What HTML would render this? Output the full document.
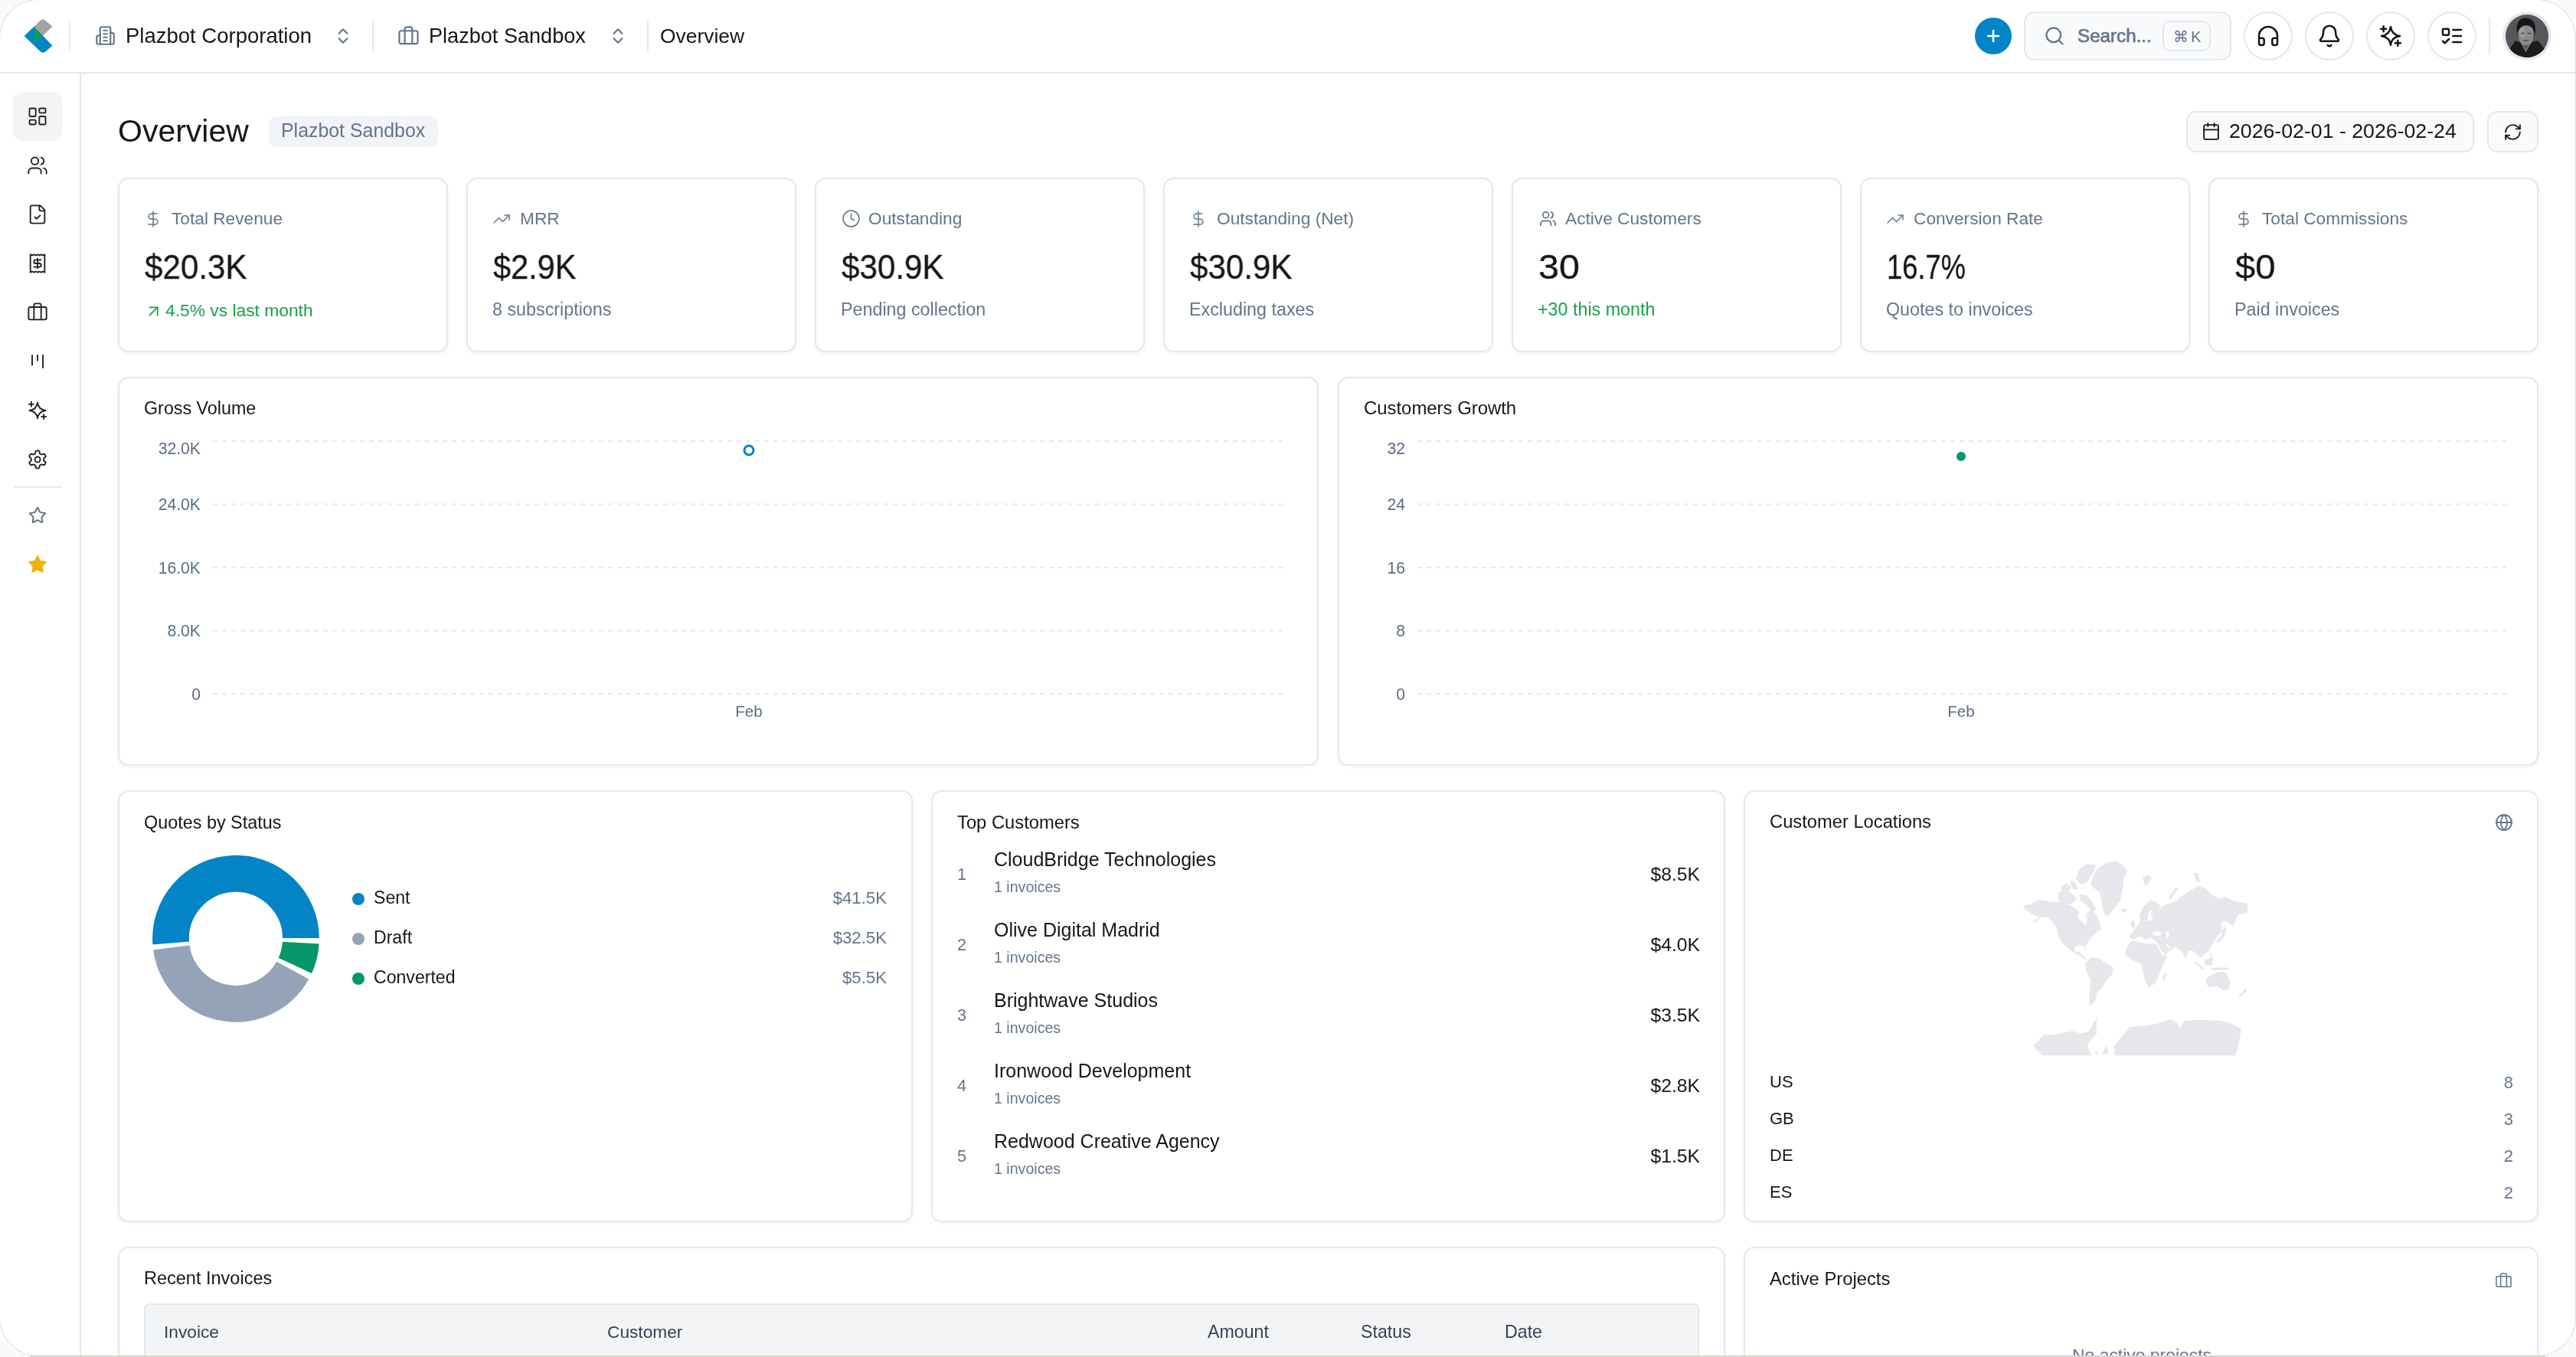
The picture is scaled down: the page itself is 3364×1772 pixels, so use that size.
<!DOCTYPE html>
<html><head><meta charset="utf-8"><style>
html,body{margin:0;padding:0;}
body{width:3364px;height:1772px;background:#fafaf8;position:relative;overflow:hidden;font-family:"Liberation Sans",sans-serif;}
#win{position:absolute;left:0;top:0;width:3363px;height:1770px;background:#fff;border-radius:50px;overflow:hidden;box-shadow:0 0 0 1px rgba(110,110,100,0.2);}
.t{will-change:transform;}
.t{position:absolute;white-space:nowrap;}
.b{position:absolute;}
.ic{position:absolute;overflow:visible;}
#strip{position:absolute;left:40px;top:1770px;width:3284px;height:2px;background:#d6d6cf;}
</style></head><body>
<div id="win">
<svg class="ic" style="left:0;top:0;width:110px;height:95px" viewBox="0 0 110 95">
<path d="M44.2 35 L53 26.6 Q56 23.8 59 26.6 L68.6 34.5 L55.8 46.6 Z" fill="#a3a3a3"/>
<path d="M31.6 47 L44.2 35 L55.8 46.6 L68.4 59.4 L60 67 Q56.2 70.3 52.4 67 Z" fill="#0284c7"/>
<path d="M44.2 35 L55.8 46.6 L44.2 57.8 Z" fill="#0b9a6a"/>
</svg>
<div class="b" style="left:90px;top:27px;width:2px;height:40px;background:#e2e8f0"></div>
<svg class="ic" style="left:124px;top:33px;width:27px;height:27px;" viewBox="0 0 24 24" fill="none" stroke="#64748b" stroke-width="1.9" stroke-linecap="round" stroke-linejoin="round"><path d="M6 22V4a2 2 0 0 1 2-2h8a2 2 0 0 1 2 2v18Z"/><path d="M6 12H4a2 2 0 0 0-2 2v6a2 2 0 0 0 2 2h2"/><path d="M18 9h2a2 2 0 0 1 2 2v9a2 2 0 0 1-2 2h-2"/><path d="M10 6h4"/><path d="M10 10h4"/><path d="M10 14h4"/><path d="M10 18h4"/></svg>
<div class="t" style="left:163.5px;top:32.72px;font-size:27.5px;line-height:27.5px;color:#171717;font-weight:400;">Plazbot Corporation</div>
<svg class="ic" style="left:435px;top:34px;width:26px;height:26px;" viewBox="0 0 24 24" fill="none" stroke="#64748b" stroke-width="2" stroke-linecap="round" stroke-linejoin="round"><path d="m7 15 5 5 5-5"/><path d="m7 9 5-5 5 5"/></svg>
<div class="b" style="left:486px;top:27px;width:2px;height:40px;background:#e2e8f0"></div>
<svg class="ic" style="left:519px;top:33px;width:29px;height:29px;" viewBox="0 0 24 24" fill="none" stroke="#64748b" stroke-width="1.8" stroke-linecap="round" stroke-linejoin="round"><path d="M16 20V4a2 2 0 0 0-2-2h-4a2 2 0 0 0-2 2v16"/><rect width="20" height="14" x="2" y="6" rx="2"/></svg>
<div class="t" style="left:559.5px;top:33.06px;font-size:27.1px;line-height:27.1px;color:#171717;font-weight:400;">Plazbot Sandbox</div>
<svg class="ic" style="left:794px;top:34px;width:26px;height:26px;" viewBox="0 0 24 24" fill="none" stroke="#64748b" stroke-width="2" stroke-linecap="round" stroke-linejoin="round"><path d="m7 15 5 5 5-5"/><path d="m7 9 5-5 5 5"/></svg>
<div class="b" style="left:845px;top:27px;width:2px;height:40px;background:#e2e8f0"></div>
<div class="t" style="left:862px;top:33.65px;font-size:26.4px;line-height:26.4px;color:#171717;font-weight:400;">Overview</div>
<div class="b" style="left:2579px;top:23px;width:48px;height:48px;background:#0284c7;border-radius:50%"></div>
<svg class="ic" style="left:2591px;top:35px;width:24px;height:24px;" viewBox="0 0 24 24" fill="none" stroke="#fff" stroke-width="2.6" stroke-linecap="round" stroke-linejoin="round"><path d="M5 12h14"/><path d="M12 5v14"/></svg>
<div class="b" style="left:2643px;top:15px;width:271px;height:64px;background:#f9fafb;border:2px solid #e2e8f0;border-radius:14px;box-sizing:border-box"></div>
<svg class="ic" style="left:2669px;top:33px;width:28px;height:28px;" viewBox="0 0 24 24" fill="none" stroke="#64748b" stroke-width="2" stroke-linecap="round" stroke-linejoin="round"><circle cx="11" cy="11" r="8"/><path d="m21 21-4.3-4.3"/></svg>
<div class="t" style="left:2713px;top:35.01px;font-size:24.2px;line-height:24.2px;color:#64748b;font-weight:400;-webkit-text-stroke:0.7px #64748b">Search...</div>
<div class="b" style="left:2824px;top:27px;width:63px;height:40px;border:2px solid #e2e8f0;border-radius:10px;box-sizing:border-box"></div>
<div class="t" style="left:2838px;top:38.07px;font-size:20px;line-height:20px;color:#64748b;font-weight:400;">&#8984;</div>
<div class="t" style="left:2861px;top:37.65px;font-size:20.5px;line-height:20.5px;color:#64748b;font-weight:400;">K</div>
<div class="b" style="left:2930px;top:15px;width:64px;height:64px;border:2px solid #e2e8f0;border-radius:50%;box-sizing:border-box"></div>
<svg class="ic" style="left:2946px;top:31px;width:32px;height:32px;" viewBox="0 0 24 24" fill="none" stroke="#171717" stroke-width="1.9" stroke-linecap="round" stroke-linejoin="round"><path d="M3 14h3a2 2 0 0 1 2 2v3a2 2 0 0 1-2 2H5a2 2 0 0 1-2-2v-7a9 9 0 0 1 18 0v7a2 2 0 0 1-2 2h-1a2 2 0 0 1-2-2v-3a2 2 0 0 1 2-2h3"/></svg>
<div class="b" style="left:3010px;top:15px;width:64px;height:64px;border:2px solid #e2e8f0;border-radius:50%;box-sizing:border-box"></div>
<svg class="ic" style="left:3026px;top:31px;width:32px;height:32px;" viewBox="0 0 24 24" fill="none" stroke="#171717" stroke-width="1.9" stroke-linecap="round" stroke-linejoin="round"><path d="M10.268 21a2 2 0 0 0 3.464 0"/><path d="M3.262 15.326A1 1 0 0 0 4 17h16a1 1 0 0 0 .74-1.673C19.41 13.956 18 12.499 18 8A6 6 0 0 0 6 8c0 4.499-1.411 5.956-2.738 7.326"/></svg>
<div class="b" style="left:3090px;top:15px;width:64px;height:64px;border:2px solid #e2e8f0;border-radius:50%;box-sizing:border-box"></div>
<svg class="ic" style="left:3106px;top:31px;width:32px;height:32px;" viewBox="0 0 24 24" fill="none" stroke="#171717" stroke-width="1.9" stroke-linecap="round" stroke-linejoin="round"><path d="M12 3.1Q13 11 21.1 12Q13 13 12 20.9Q11 13 2.9 12Q11 11 12 3.1Z"/><path d="M5 2.4v5.2"/><path d="M2.4 5h5.2"/><path d="M19 16.4v5.2"/><path d="M16.4 19h5.2"/></svg>
<div class="b" style="left:3170px;top:15px;width:64px;height:64px;border:2px solid #e2e8f0;border-radius:50%;box-sizing:border-box"></div>
<svg class="ic" style="left:3186px;top:31px;width:32px;height:32px;" viewBox="0 0 24 24" fill="none" stroke="#171717" stroke-width="1.9" stroke-linecap="round" stroke-linejoin="round"><rect x="3" y="5" width="6" height="6" rx="1"/><path d="m3 17 2 2 4-4"/><path d="M13 6h8"/><path d="M13 12h8"/><path d="M13 18h8"/></svg>
<div class="b" style="left:3250px;top:23px;width:2px;height:48px;background:#e2e8f0"></div>
<svg class="ic" style="left:3267px;top:14px;width:66px;height:66px" viewBox="0 0 66 66">
<defs><clipPath id="av"><circle cx="33" cy="33" r="28"/></clipPath></defs>
<circle cx="33" cy="33" r="31.7" fill="#e2e8f0"/>
<g clip-path="url(#av)">
<rect x="0" y="0" width="66" height="66" fill="#56575b"/>
<path d="M21.5,27 Q21.5,16.5 31.5,16.5 Q41.5,16.5 41.5,28 L41,36 Q39.5,44 31.5,45.5 Q23.5,44 22.5,37 Z" fill="#8c8c8c"/>
<ellipse cx="27" cy="29" rx="4" ry="7" fill="#a5a5a5" opacity="0.6"/>
<path d="M25,29.5h4.5M34,29.5h4.5M28,39h7" stroke="#4a4a4a" stroke-width="1.3"/>
<path d="M24.8,40 L31.5,52 L38.3,40 L40,48 L31.5,56 L23,48 Z" fill="#888888"/>
<path d="M20,30 Q17.5,10 31,9.5 Q45,9.5 44,27 L43,33 Q42,21 35,19.5 Q26,18 22.5,25 Z" fill="#161616"/>
<path d="M9,52 L17.6,39.3 Q22,40 24.8,42 L31.5,54 L38.5,42 Q43,39.5 47.5,39.3 L56,50 L66,66 L0,66 Z" fill="#1b1b1b"/>
</g></svg>
<div class="b" style="left:0px;top:94px;width:3364px;height:2px;background:#e2e8f0"></div>
<div class="b" style="left:104px;top:96px;width:2px;height:1680px;background:#e2e8f0"></div>
<div class="b" style="left:17px;top:120px;width:64px;height:64px;background:#f3f4f6;border-radius:12px"></div>
<svg class="ic" style="left:35px;top:138px;width:28px;height:28px;" viewBox="0 0 24 24" fill="none" stroke="#1f1f1f" stroke-width="1.6" stroke-linecap="round" stroke-linejoin="round"><rect width="7" height="9" x="3" y="3" rx="1"/><rect width="7" height="5" x="14" y="3" rx="1"/><rect width="7" height="9" x="14" y="12" rx="1"/><rect width="7" height="5" x="3" y="16" rx="1"/></svg>
<svg class="ic" style="left:35px;top:202px;width:28px;height:28px;" viewBox="0 0 24 24" fill="none" stroke="#1f1f1f" stroke-width="1.6" stroke-linecap="round" stroke-linejoin="round"><path d="M16 21v-2a4 4 0 0 0-4-4H6a4 4 0 0 0-4 4v2"/><circle cx="9" cy="7" r="4"/><path d="M22 21v-2a4 4 0 0 0-3-3.87"/><path d="M16 3.13a4 4 0 0 1 0 7.75"/></svg>
<svg class="ic" style="left:35px;top:266px;width:28px;height:28px;" viewBox="0 0 24 24" fill="none" stroke="#1f1f1f" stroke-width="1.6" stroke-linecap="round" stroke-linejoin="round"><path d="M15 2H6a2 2 0 0 0-2 2v16a2 2 0 0 0 2 2h12a2 2 0 0 0 2-2V7Z"/><path d="M14 2v4a2 2 0 0 0 2 2h4"/><path d="m9 15 2 2 4-4"/></svg>
<svg class="ic" style="left:35px;top:330px;width:28px;height:28px;" viewBox="0 0 24 24" fill="none" stroke="#1f1f1f" stroke-width="1.6" stroke-linecap="round" stroke-linejoin="round"><path d="M4 2v20l2-1 2 1 2-1 2 1 2-1 2 1 2-1 2 1V2l-2 1-2-1-2 1-2-1-2 1-2-1-2 1Z"/><path d="M16 8h-6a2 2 0 1 0 0 4h4a2 2 0 1 1 0 4H8"/><path d="M12 17.5v-11"/></svg>
<svg class="ic" style="left:35px;top:394px;width:28px;height:28px;" viewBox="0 0 24 24" fill="none" stroke="#1f1f1f" stroke-width="1.6" stroke-linecap="round" stroke-linejoin="round"><path d="M16 20V4a2 2 0 0 0-2-2h-4a2 2 0 0 0-2 2v16"/><rect width="20" height="14" x="2" y="6" rx="2"/></svg>
<svg class="ic" style="left:35px;top:458px;width:28px;height:28px;" viewBox="0 0 24 24" fill="none" stroke="#1f1f1f" stroke-width="1.6" stroke-linecap="round" stroke-linejoin="round"><path d="M6 5v11"/><path d="M12 5v6"/><path d="M18 5v14"/></svg>
<svg class="ic" style="left:35px;top:522px;width:28px;height:28px;" viewBox="0 0 24 24" fill="none" stroke="#1f1f1f" stroke-width="1.6" stroke-linecap="round" stroke-linejoin="round"><path d="M12 3.1Q13 11 21.1 12Q13 13 12 20.9Q11 13 2.9 12Q11 11 12 3.1Z"/><path d="M5 2.4v5.2"/><path d="M2.4 5h5.2"/><path d="M19 16.4v5.2"/><path d="M16.4 19h5.2"/></svg>
<svg class="ic" style="left:35px;top:586px;width:28px;height:28px;" viewBox="0 0 24 24" fill="none" stroke="#1f1f1f" stroke-width="1.6" stroke-linecap="round" stroke-linejoin="round"><path d="M12.22 2h-.44a2 2 0 0 0-2 2v.18a2 2 0 0 1-1 1.73l-.43.25a2 2 0 0 1-2 0l-.15-.08a2 2 0 0 0-2.73.73l-.22.38a2 2 0 0 0 .73 2.73l.15.1a2 2 0 0 1 1 1.72v.51a2 2 0 0 1-1 1.74l-.15.09a2 2 0 0 0-.73 2.73l.22.38a2 2 0 0 0 2.73.73l.15-.08a2 2 0 0 1 2 0l.43.25a2 2 0 0 1 1 1.73V20a2 2 0 0 0 2 2h.44a2 2 0 0 0 2-2v-.18a2 2 0 0 1 1-1.73l.43-.25a2 2 0 0 1 2 0l.15.08a2 2 0 0 0 2.73-.73l.22-.39a2 2 0 0 0-.73-2.73l-.15-.08a2 2 0 0 1-1-1.74v-.5a2 2 0 0 1 1-1.74l.15-.09a2 2 0 0 0 .73-2.73l-.22-.38a2 2 0 0 0-2.73-.73l-.15.08a2 2 0 0 1-2 0l-.43-.25a2 2 0 0 1-1-1.73V4a2 2 0 0 0-2-2z"/><circle cx="12" cy="12" r="3"/></svg>
<div class="b" style="left:18px;top:635px;width:62px;height:2px;background:#e2e8f0"></div>
<svg class="ic" style="left:37px;top:661.1999999999999px;width:24px;height:24px;" viewBox="0 0 24 24" fill="none" stroke="#64748b" stroke-width="2" stroke-linecap="round" stroke-linejoin="round"><path d="M11.525 2.295a.53.53 0 0 1 .95 0l2.31 4.679a2.123 2.123 0 0 0 1.595 1.16l5.166.756a.53.53 0 0 1 .294.904l-3.736 3.638a2.123 2.123 0 0 0-.611 1.878l.882 5.14a.53.53 0 0 1-.771.56l-4.618-2.428a2.122 2.122 0 0 0-1.973 0L6.396 21.01a.53.53 0 0 1-.77-.56l.881-5.139a2.122 2.122 0 0 0-.611-1.879L2.16 9.795a.53.53 0 0 1 .294-.906l5.165-.755a2.122 2.122 0 0 0 1.597-1.16z"/></svg>
<svg class="ic" style="left:35px;top:723.2px;width:28px;height:28px;" viewBox="0 0 24 24" fill="#eab308" stroke="#eab308" stroke-width="0.5" stroke-linecap="round" stroke-linejoin="round"><path d="M11.525 2.295a.53.53 0 0 1 .95 0l2.31 4.679a2.123 2.123 0 0 0 1.595 1.16l5.166.756a.53.53 0 0 1 .294.904l-3.736 3.638a2.123 2.123 0 0 0-.611 1.878l.882 5.14a.53.53 0 0 1-.771.56l-4.618-2.428a2.122 2.122 0 0 0-1.973 0L6.396 21.01a.53.53 0 0 1-.77-.56l.881-5.139a2.122 2.122 0 0 0-.611-1.879L2.16 9.795a.53.53 0 0 1 .294-.906l5.165-.755a2.122 2.122 0 0 0 1.597-1.16z"/></svg>
<div class="t" style="left:154px;top:151.29px;font-size:41px;line-height:41px;color:#171717;font-weight:400;">Overview</div>
<div class="b" style="left:351px;top:152px;width:221px;height:40px;background:#f1f3f6;border-radius:10px"></div>
<div class="t" style="left:367px;top:158.42px;font-size:24.9px;line-height:24.9px;color:#64748b;font-weight:400;">Plazbot Sandbox</div>
<div class="b" style="left:2855px;top:145px;width:376px;height:54px;background:#fafafa;border:2px solid #e2e8f0;border-radius:13px;box-sizing:border-box"></div>
<svg class="ic" style="left:2875px;top:159px;width:25px;height:25px;" viewBox="0 0 24 24" fill="none" stroke="#171717" stroke-width="1.8" stroke-linecap="round" stroke-linejoin="round"><path d="M8 2v4"/><path d="M16 2v4"/><rect width="18" height="18" x="3" y="4" rx="2"/><path d="M3 10h18"/></svg>
<div class="t" style="left:2911px;top:157.90px;font-size:26.7px;line-height:26.7px;color:#171717;font-weight:400;">2026-02-01 - 2026-02-24</div>
<div class="b" style="left:3248px;top:145px;width:67px;height:54px;background:#fafafa;border:2px solid #e2e8f0;border-radius:13px;box-sizing:border-box"></div>
<svg class="ic" style="left:3269px;top:160px;width:25px;height:25px;" viewBox="0 0 24 24" fill="none" stroke="#171717" stroke-width="1.8" stroke-linecap="round" stroke-linejoin="round"><path d="M3 12a9 9 0 0 1 9-9 9.75 9.75 0 0 1 6.74 2.74L21 8"/><path d="M21 3v5h-5"/><path d="M21 12a9 9 0 0 1-9 9 9.75 9.75 0 0 1-6.74-2.74L3 16"/><path d="M8 16H3v5"/></svg>
<div class="b" style="left:154px;top:232px;width:431px;height:228px;background:#fff;border:2px solid #e2e8f0;border-radius:14px;box-sizing:border-box;box-shadow:0 2px 4px rgba(15,23,42,0.05)"></div>
<svg class="ic" style="left:188px;top:274px;width:24px;height:24px;" viewBox="0 0 24 24" fill="none" stroke="#64748b" stroke-width="1.5" stroke-linecap="round" stroke-linejoin="round"><line x1="12" x2="12" y1="2" y2="22"/><path d="M17 5H9.5a3.5 3.5 0 0 0 0 7h5a3.5 3.5 0 0 1 0 7H6"/></svg>
<div class="t" style="left:224px;top:274.28px;font-size:22.7px;line-height:22.7px;color:#64748b;font-weight:400;">Total Revenue</div>
<div class="t" style="left:188.5px;top:326.53px;font-size:44.5px;line-height:44.5px;color:#171717;font-weight:400;-webkit-text-stroke:0.35px #171717;transform:scaleX(0.947);transform-origin:left top;">$20.3K</div>
<svg class="ic" style="left:187.6px;top:393.8px;width:25px;height:25px;" viewBox="0 0 24 24" fill="none" stroke="#16a34a" stroke-width="1.7" stroke-linecap="round" stroke-linejoin="round"><path d="M7 7h10v10"/><path d="M7 17 17 7"/></svg>
<div class="t" style="left:216px;top:393.70px;font-size:22.8px;line-height:22.8px;color:#16a34a;font-weight:400;">4.5% vs last month</div>
<div class="b" style="left:609px;top:232px;width:431px;height:228px;background:#fff;border:2px solid #e2e8f0;border-radius:14px;box-sizing:border-box;box-shadow:0 2px 4px rgba(15,23,42,0.05)"></div>
<svg class="ic" style="left:643px;top:274px;width:24px;height:24px;" viewBox="0 0 24 24" fill="none" stroke="#64748b" stroke-width="1.5" stroke-linecap="round" stroke-linejoin="round"><polyline points="22 7 13.5 15.5 8.5 10.5 2 17"/><polyline points="16 7 22 7 22 13"/></svg>
<div class="t" style="left:679px;top:274.28px;font-size:22.7px;line-height:22.7px;color:#64748b;font-weight:400;">MRR</div>
<div class="t" style="left:643.5px;top:326.53px;font-size:44.5px;line-height:44.5px;color:#171717;font-weight:400;-webkit-text-stroke:0.35px #171717;transform:scaleX(0.933);transform-origin:left top;">$2.9K</div>
<div class="t" style="left:643px;top:393.28px;font-size:23.3px;line-height:23.3px;color:#64748b;font-weight:400;">8 subscriptions</div>
<div class="b" style="left:1064px;top:232px;width:431px;height:228px;background:#fff;border:2px solid #e2e8f0;border-radius:14px;box-sizing:border-box;box-shadow:0 2px 4px rgba(15,23,42,0.05)"></div>
<svg class="ic" style="left:1099px;top:273px;width:25px;height:25px;" viewBox="0 0 24 24" fill="none" stroke="#64748b" stroke-width="1.5" stroke-linecap="round" stroke-linejoin="round"><circle cx="12" cy="12" r="10"/><polyline points="12 6 12 12 16 14"/></svg>
<div class="t" style="left:1134px;top:274.28px;font-size:22.7px;line-height:22.7px;color:#64748b;font-weight:400;">Outstanding</div>
<div class="t" style="left:1098.5px;top:326.53px;font-size:44.5px;line-height:44.5px;color:#171717;font-weight:400;-webkit-text-stroke:0.35px #171717;transform:scaleX(0.947);transform-origin:left top;">$30.9K</div>
<div class="t" style="left:1098px;top:393.28px;font-size:23.3px;line-height:23.3px;color:#64748b;font-weight:400;">Pending collection</div>
<div class="b" style="left:1519px;top:232px;width:431px;height:228px;background:#fff;border:2px solid #e2e8f0;border-radius:14px;box-sizing:border-box;box-shadow:0 2px 4px rgba(15,23,42,0.05)"></div>
<svg class="ic" style="left:1553px;top:274px;width:24px;height:24px;" viewBox="0 0 24 24" fill="none" stroke="#64748b" stroke-width="1.5" stroke-linecap="round" stroke-linejoin="round"><line x1="12" x2="12" y1="2" y2="22"/><path d="M17 5H9.5a3.5 3.5 0 0 0 0 7h5a3.5 3.5 0 0 1 0 7H6"/></svg>
<div class="t" style="left:1589px;top:274.28px;font-size:22.7px;line-height:22.7px;color:#64748b;font-weight:400;">Outstanding (Net)</div>
<div class="t" style="left:1553.5px;top:326.53px;font-size:44.5px;line-height:44.5px;color:#171717;font-weight:400;-webkit-text-stroke:0.35px #171717;transform:scaleX(0.947);transform-origin:left top;">$30.9K</div>
<div class="t" style="left:1553px;top:393.28px;font-size:23.3px;line-height:23.3px;color:#64748b;font-weight:400;">Excluding taxes</div>
<div class="b" style="left:1974px;top:232px;width:431px;height:228px;background:#fff;border:2px solid #e2e8f0;border-radius:14px;box-sizing:border-box;box-shadow:0 2px 4px rgba(15,23,42,0.05)"></div>
<svg class="ic" style="left:2010px;top:274px;width:23px;height:23px;" viewBox="0 0 24 24" fill="none" stroke="#64748b" stroke-width="1.8" stroke-linecap="round" stroke-linejoin="round"><path d="M16 21v-2a4 4 0 0 0-4-4H6a4 4 0 0 0-4 4v2"/><circle cx="9" cy="7" r="4"/><path d="M22 21v-2a4 4 0 0 0-3-3.87"/><path d="M16 3.13a4 4 0 0 1 0 7.75"/></svg>
<div class="t" style="left:2044px;top:274.28px;font-size:22.7px;line-height:22.7px;color:#64748b;font-weight:400;">Active Customers</div>
<div class="t" style="left:2008.5px;top:326.53px;font-size:44.5px;line-height:44.5px;color:#171717;font-weight:400;-webkit-text-stroke:0.35px #171717;transform:scaleX(1.0888);transform-origin:left top;">30</div>
<div class="t" style="left:2008px;top:393.28px;font-size:23.3px;line-height:23.3px;color:#16a34a;font-weight:400;">+30 this month</div>
<div class="b" style="left:2429px;top:232px;width:431px;height:228px;background:#fff;border:2px solid #e2e8f0;border-radius:14px;box-sizing:border-box;box-shadow:0 2px 4px rgba(15,23,42,0.05)"></div>
<svg class="ic" style="left:2463px;top:274px;width:24px;height:24px;" viewBox="0 0 24 24" fill="none" stroke="#64748b" stroke-width="1.5" stroke-linecap="round" stroke-linejoin="round"><polyline points="22 7 13.5 15.5 8.5 10.5 2 17"/><polyline points="16 7 22 7 22 13"/></svg>
<div class="t" style="left:2499px;top:274.28px;font-size:22.7px;line-height:22.7px;color:#64748b;font-weight:400;">Conversion Rate</div>
<div class="t" style="left:2463.5px;top:326.53px;font-size:44.5px;line-height:44.5px;color:#171717;font-weight:400;-webkit-text-stroke:0.35px #171717;transform:scaleX(0.8164);transform-origin:left top;">16.7%</div>
<div class="t" style="left:2463px;top:393.28px;font-size:23.3px;line-height:23.3px;color:#64748b;font-weight:400;">Quotes to invoices</div>
<div class="b" style="left:2884px;top:232px;width:431px;height:228px;background:#fff;border:2px solid #e2e8f0;border-radius:14px;box-sizing:border-box;box-shadow:0 2px 4px rgba(15,23,42,0.05)"></div>
<svg class="ic" style="left:2918px;top:274px;width:24px;height:24px;" viewBox="0 0 24 24" fill="none" stroke="#64748b" stroke-width="1.5" stroke-linecap="round" stroke-linejoin="round"><line x1="12" x2="12" y1="2" y2="22"/><path d="M17 5H9.5a3.5 3.5 0 0 0 0 7h5a3.5 3.5 0 0 1 0 7H6"/></svg>
<div class="t" style="left:2954px;top:274.28px;font-size:22.7px;line-height:22.7px;color:#64748b;font-weight:400;">Total Commissions</div>
<div class="t" style="left:2918.5px;top:326.53px;font-size:44.5px;line-height:44.5px;color:#171717;font-weight:400;-webkit-text-stroke:0.35px #171717;transform:scaleX(1.0599);transform-origin:left top;">$0</div>
<div class="t" style="left:2918px;top:393.28px;font-size:23.3px;line-height:23.3px;color:#64748b;font-weight:400;">Paid invoices</div>
<div class="b" style="left:154px;top:492px;width:1568px;height:508px;background:#fff;border:2px solid #e2e8f0;border-radius:14px;box-sizing:border-box;box-shadow:0 2px 4px rgba(15,23,42,0.05)"></div>
<div class="t" style="left:188px;top:521.78px;font-size:23.3px;line-height:23.3px;color:#171717;font-weight:400;">Gross Volume</div>
<svg class="ic" style="left:0;top:0;width:3364px;height:1772px" viewBox="0 0 3364 1772"><line x1="278" x2="1675" y1="576" y2="576" stroke="#e5e7eb" stroke-width="2" stroke-dasharray="6 6"/><line x1="278" x2="1675" y1="658.5" y2="658.5" stroke="#e5e7eb" stroke-width="2" stroke-dasharray="6 6"/><line x1="278" x2="1675" y1="741" y2="741" stroke="#e5e7eb" stroke-width="2" stroke-dasharray="6 6"/><line x1="278" x2="1675" y1="823.5" y2="823.5" stroke="#e5e7eb" stroke-width="2" stroke-dasharray="6 6"/><line x1="278" x2="1675" y1="906" y2="906" stroke="#e5e7eb" stroke-width="2" stroke-dasharray="6 6"/><circle cx="978" cy="588" r="6" fill="#fff" stroke="#0284c7" stroke-width="3"/></svg>
<div class="t" style="left:-938px;width:1200px;text-align:right;top:575.25px;font-size:21.2px;line-height:21.2px;color:#5b6b82;font-weight:400;">32.0K</div>
<div class="t" style="left:-938px;width:1200px;text-align:right;top:648.05px;font-size:21.2px;line-height:21.2px;color:#5b6b82;font-weight:400;">24.0K</div>
<div class="t" style="left:-938px;width:1200px;text-align:right;top:730.55px;font-size:21.2px;line-height:21.2px;color:#5b6b82;font-weight:400;">16.0K</div>
<div class="t" style="left:-938px;width:1200px;text-align:right;top:813.05px;font-size:21.2px;line-height:21.2px;color:#5b6b82;font-weight:400;">8.0K</div>
<div class="t" style="left:-938px;width:1200px;text-align:right;top:895.55px;font-size:21.2px;line-height:21.2px;color:#5b6b82;font-weight:400;">0</div>
<div class="t" style="left:378px;width:1200px;text-align:center;top:918.65px;font-size:20.5px;line-height:20.5px;color:#5b6b82;font-weight:400;">Feb</div>
<div class="b" style="left:1746.5px;top:492px;width:1568px;height:508px;background:#fff;border:2px solid #e2e8f0;border-radius:14px;box-sizing:border-box;box-shadow:0 2px 4px rgba(15,23,42,0.05)"></div>
<div class="t" style="left:1780.5px;top:521.27px;font-size:23.9px;line-height:23.9px;color:#171717;font-weight:400;">Customers Growth</div>
<svg class="ic" style="left:0;top:0;width:3364px;height:1772px" viewBox="0 0 3364 1772"><line x1="1851" x2="3273" y1="576" y2="576" stroke="#e5e7eb" stroke-width="2" stroke-dasharray="6 6"/><line x1="1851" x2="3273" y1="658.5" y2="658.5" stroke="#e5e7eb" stroke-width="2" stroke-dasharray="6 6"/><line x1="1851" x2="3273" y1="741" y2="741" stroke="#e5e7eb" stroke-width="2" stroke-dasharray="6 6"/><line x1="1851" x2="3273" y1="823.5" y2="823.5" stroke="#e5e7eb" stroke-width="2" stroke-dasharray="6 6"/><line x1="1851" x2="3273" y1="906" y2="906" stroke="#e5e7eb" stroke-width="2" stroke-dasharray="6 6"/><circle cx="2561" cy="596" r="6" fill="#059669"/></svg>
<div class="t" style="left:635px;width:1200px;text-align:right;top:575.25px;font-size:21.2px;line-height:21.2px;color:#5b6b82;font-weight:400;">32</div>
<div class="t" style="left:635px;width:1200px;text-align:right;top:648.05px;font-size:21.2px;line-height:21.2px;color:#5b6b82;font-weight:400;">24</div>
<div class="t" style="left:635px;width:1200px;text-align:right;top:730.55px;font-size:21.2px;line-height:21.2px;color:#5b6b82;font-weight:400;">16</div>
<div class="t" style="left:635px;width:1200px;text-align:right;top:813.05px;font-size:21.2px;line-height:21.2px;color:#5b6b82;font-weight:400;">8</div>
<div class="t" style="left:635px;width:1200px;text-align:right;top:895.55px;font-size:21.2px;line-height:21.2px;color:#5b6b82;font-weight:400;">0</div>
<div class="t" style="left:1961px;width:1200px;text-align:center;top:918.65px;font-size:20.5px;line-height:20.5px;color:#5b6b82;font-weight:400;">Feb</div>
<div class="b" style="left:154px;top:1032px;width:1037.67px;height:564px;background:#fff;border:2px solid #e2e8f0;border-radius:14px;box-sizing:border-box;box-shadow:0 2px 4px rgba(15,23,42,0.05)"></div>
<div class="b" style="left:1215.67px;top:1032px;width:1037.67px;height:564px;background:#fff;border:2px solid #e2e8f0;border-radius:14px;box-sizing:border-box;box-shadow:0 2px 4px rgba(15,23,42,0.05)"></div>
<div class="b" style="left:2277.34px;top:1032px;width:1037.67px;height:564px;background:#fff;border:2px solid #e2e8f0;border-radius:14px;box-sizing:border-box;box-shadow:0 2px 4px rgba(15,23,42,0.05)"></div>
<div class="t" style="left:188px;top:1063.19px;font-size:23.4px;line-height:23.4px;color:#171717;font-weight:400;">Quotes by Status</div>
<svg class="ic" style="left:0;top:0;width:3364px;height:1772px" viewBox="0 0 3364 1772"><path d="M417.80,1225.80 A109.8,109.8 0 1 0 198.54,1234.41 L247.99,1230.52 A60.2,60.2 0 1 1 368.20,1225.80 Z" fill="#0284c7" stroke="#fff" stroke-width="1.8"/><path d="M199.07,1239.56 A109.8,109.8 0 0 0 404.49,1278.19 L360.90,1254.52 A60.2,60.2 0 0 1 248.27,1233.35 Z" fill="#94a3b8" stroke="#fff" stroke-width="1.8"/><path d="M407.51,1272.20 A109.8,109.8 0 0 0 417.65,1231.55 L368.12,1228.95 A60.2,60.2 0 0 1 362.56,1251.24 Z" fill="#059669" stroke="#fff" stroke-width="1.8"/></svg>
<div class="b" style="left:460px;top:1166px;width:16px;height:16px;background:#0284c7;border-radius:50%"></div>
<div class="t" style="left:488px;top:1161.45px;font-size:23.1px;line-height:23.1px;color:#171717;font-weight:400;">Sent</div>
<div class="t" style="left:-42px;width:1200px;text-align:right;top:1162.21px;font-size:22.2px;line-height:22.2px;color:#64748b;font-weight:400;">$41.5K</div>
<div class="b" style="left:460px;top:1218px;width:16px;height:16px;background:#94a3b8;border-radius:50%"></div>
<div class="t" style="left:488px;top:1213.45px;font-size:23.1px;line-height:23.1px;color:#171717;font-weight:400;">Draft</div>
<div class="t" style="left:-42px;width:1200px;text-align:right;top:1214.21px;font-size:22.2px;line-height:22.2px;color:#64748b;font-weight:400;">$32.5K</div>
<div class="b" style="left:460px;top:1270px;width:16px;height:16px;background:#059669;border-radius:50%"></div>
<div class="t" style="left:488px;top:1265.45px;font-size:23.1px;line-height:23.1px;color:#171717;font-weight:400;">Converted</div>
<div class="t" style="left:-42px;width:1200px;text-align:right;top:1266.21px;font-size:22.2px;line-height:22.2px;color:#64748b;font-weight:400;">$5.5K</div>
<div class="t" style="left:1249.67px;top:1061.90px;font-size:23.75px;line-height:23.75px;color:#171717;font-weight:400;">Top Customers</div>
<div class="t" style="left:1249.67px;top:1131.22px;font-size:21.6px;line-height:21.6px;color:#64748b;font-weight:400;">1</div>
<div class="t" style="left:1297.67px;top:1109.84px;font-size:25px;line-height:25px;color:#171717;font-weight:400;">CloudBridge Technologies</div>
<div class="t" style="left:1297.67px;top:1148.91px;font-size:19.6px;line-height:19.6px;color:#64748b;font-weight:400;">1 invoices</div>
<div class="t" style="left:1019.5px;width:1200px;text-align:right;top:1129.59px;font-size:24.7px;line-height:24.7px;color:#171717;font-weight:400;">$8.5K</div>
<div class="t" style="left:1249.67px;top:1223.22px;font-size:21.6px;line-height:21.6px;color:#64748b;font-weight:400;">2</div>
<div class="t" style="left:1297.67px;top:1201.84px;font-size:25px;line-height:25px;color:#171717;font-weight:400;">Olive Digital Madrid</div>
<div class="t" style="left:1297.67px;top:1240.91px;font-size:19.6px;line-height:19.6px;color:#64748b;font-weight:400;">1 invoices</div>
<div class="t" style="left:1019.5px;width:1200px;text-align:right;top:1221.59px;font-size:24.7px;line-height:24.7px;color:#171717;font-weight:400;">$4.0K</div>
<div class="t" style="left:1249.67px;top:1315.22px;font-size:21.6px;line-height:21.6px;color:#64748b;font-weight:400;">3</div>
<div class="t" style="left:1297.67px;top:1293.84px;font-size:25px;line-height:25px;color:#171717;font-weight:400;">Brightwave Studios</div>
<div class="t" style="left:1297.67px;top:1332.91px;font-size:19.6px;line-height:19.6px;color:#64748b;font-weight:400;">1 invoices</div>
<div class="t" style="left:1019.5px;width:1200px;text-align:right;top:1313.59px;font-size:24.7px;line-height:24.7px;color:#171717;font-weight:400;">$3.5K</div>
<div class="t" style="left:1249.67px;top:1407.22px;font-size:21.6px;line-height:21.6px;color:#64748b;font-weight:400;">4</div>
<div class="t" style="left:1297.67px;top:1385.84px;font-size:25px;line-height:25px;color:#171717;font-weight:400;">Ironwood Development</div>
<div class="t" style="left:1297.67px;top:1424.91px;font-size:19.6px;line-height:19.6px;color:#64748b;font-weight:400;">1 invoices</div>
<div class="t" style="left:1019.5px;width:1200px;text-align:right;top:1405.59px;font-size:24.7px;line-height:24.7px;color:#171717;font-weight:400;">$2.8K</div>
<div class="t" style="left:1249.67px;top:1499.22px;font-size:21.6px;line-height:21.6px;color:#64748b;font-weight:400;">5</div>
<div class="t" style="left:1297.67px;top:1477.84px;font-size:25px;line-height:25px;color:#171717;font-weight:400;">Redwood Creative Agency</div>
<div class="t" style="left:1297.67px;top:1516.91px;font-size:19.6px;line-height:19.6px;color:#64748b;font-weight:400;">1 invoices</div>
<div class="t" style="left:1019.5px;width:1200px;text-align:right;top:1497.59px;font-size:24.7px;line-height:24.7px;color:#171717;font-weight:400;">$1.5K</div>
<div class="t" style="left:2311.34px;top:1061.91px;font-size:23.73px;line-height:23.73px;color:#171717;font-weight:400;">Customer Locations</div>
<svg class="ic" style="left:3258px;top:1062px;width:24px;height:24px;" viewBox="0 0 24 24" fill="none" stroke="#64748b" stroke-width="1.8" stroke-linecap="round" stroke-linejoin="round"><circle cx="12" cy="12" r="10"/><path d="M12 2a14.5 14.5 0 0 0 0 20 14.5 14.5 0 0 0 0-20"/><path d="M2 12h20"/></svg>
<div class="t" style="left:2311.34px;top:1402.38px;font-size:22px;line-height:22px;color:#171717;font-weight:400;">US</div>
<div class="t" style="left:2082px;width:1200px;text-align:right;top:1402.88px;font-size:22px;line-height:22px;color:#64748b;font-weight:400;">8</div>
<div class="t" style="left:2311.34px;top:1450.28px;font-size:22px;line-height:22px;color:#171717;font-weight:400;">GB</div>
<div class="t" style="left:2082px;width:1200px;text-align:right;top:1450.78px;font-size:22px;line-height:22px;color:#64748b;font-weight:400;">3</div>
<div class="t" style="left:2311.34px;top:1498.18px;font-size:22px;line-height:22px;color:#171717;font-weight:400;">DE</div>
<div class="t" style="left:2082px;width:1200px;text-align:right;top:1498.68px;font-size:22px;line-height:22px;color:#64748b;font-weight:400;">2</div>
<div class="t" style="left:2311.34px;top:1546.08px;font-size:22px;line-height:22px;color:#171717;font-weight:400;">ES</div>
<div class="t" style="left:2082px;width:1200px;text-align:right;top:1546.58px;font-size:22px;line-height:22px;color:#64748b;font-weight:400;">2</div>
<div class="b" style="left:154px;top:1628px;width:2099.34px;height:300px;background:#fff;border:2px solid #e2e8f0;border-radius:14px;box-sizing:border-box;box-shadow:0 2px 4px rgba(15,23,42,0.05)"></div>
<div class="b" style="left:2277.34px;top:1628px;width:1037.67px;height:300px;background:#fff;border:2px solid #e2e8f0;border-radius:14px;box-sizing:border-box;box-shadow:0 2px 4px rgba(15,23,42,0.05)"></div>
<div class="t" style="left:188px;top:1658.11px;font-size:23.5px;line-height:23.5px;color:#171717;font-weight:400;">Recent Invoices</div>
<div class="b" style="left:188px;top:1702px;width:2031px;height:120px;background:#f3f4f6;border:2px solid #e2e8f0;border-radius:8px;box-sizing:border-box"></div>
<div class="t" style="left:214px;top:1727.78px;font-size:22.7px;line-height:22.7px;color:#374151;font-weight:400;">Invoice</div>
<div class="t" style="left:793px;top:1727.78px;font-size:22.7px;line-height:22.7px;color:#374151;font-weight:400;">Customer</div>
<div class="t" style="left:1576.5px;top:1728.36px;font-size:23.2px;line-height:23.2px;color:#374151;font-weight:400;">Amount</div>
<div class="t" style="left:1777px;top:1728.36px;font-size:23.2px;line-height:23.2px;color:#374151;font-weight:400;">Status</div>
<div class="t" style="left:1964.5px;top:1728.36px;font-size:23.2px;line-height:23.2px;color:#374151;font-weight:400;">Date</div>
<div class="t" style="left:2311.34px;top:1657.85px;font-size:23.8px;line-height:23.8px;color:#171717;font-weight:400;">Active Projects</div>
<svg class="ic" style="left:3258.4px;top:1660.6px;width:23px;height:23px;" viewBox="0 0 24 24" fill="none" stroke="#64748b" stroke-width="1.6" stroke-linecap="round" stroke-linejoin="round"><path d="M16 20V4a2 2 0 0 0-2-2h-4a2 2 0 0 0-2 2v16"/><rect width="20" height="14" x="2" y="6" rx="2"/></svg>
<div class="t" style="left:2197px;width:1200px;text-align:center;top:1758.12px;font-size:22.9px;line-height:22.9px;color:#64748b;font-weight:400;">No active projects</div>
<svg class="ic" style="left:0;top:0;width:3364px;height:1772px" viewBox="0 0 3364 1772"><g fill="#e5e7eb"><g transform="translate(2636 1118) scale(0.14734)"><path d="M42,440 L120,420 L175,385 L300,405 L390,400 L430,420 L500,460 L540,490 L520,540 L560,580 L595,610 L610,560 L600,510 L650,470 L690,520 L720,600 L740,650 L700,665 L665,700 L625,745 L598,790 L600,835 L585,820 L575,795 L540,790 L500,800 L495,830 L510,850 L545,845 L560,870 L580,890 L600,910 L590,920 L540,880 L480,850 L420,800 L380,760 L350,700 L340,640 L300,580 L250,540 L200,540 L150,585 L120,590 L180,540 L110,510 L60,470Z"/><path d="M530,130 L600,70 L690,80 L660,150 L600,240 L550,250 L510,200Z"/><path d="M540,340 L600,345 L650,400 L690,470 L650,490 L600,430 L550,400Z"/><path d="M350,330 L400,300 L470,330 L520,380 L470,420 L400,420 L350,380Z"/><path d="M380,270 L430,240 L470,280 L430,320 L380,300Z"/><path d="M460,210 L500,230 L530,290 L490,300 L465,260Z"/><path d="M640,230 L690,120 L780,60 L870,40 L920,80 L965,130 L930,200 L920,320 L900,400 L840,470 L800,530 L760,520 L740,420 L720,320 L650,270Z"/><path d="M905,470 L950,460 L960,490 L920,500Z"/><path d="M590,950 L650,895 L720,910 L790,960 L845,990 L830,1050 L780,1100 L740,1170 L700,1200 L680,1280 L650,1320 L625,1310 L630,1200 L640,1100 L600,1020Z"/></g><g transform="translate(2776 1118) scale(0.14745)"><path d="M35,700 L60,680 L80,640 L110,610 L130,570 L120,520 L160,440 L220,390 L280,410 L310,450 L290,480 L330,440 L380,420 L450,400 L490,360 L540,330 L580,300 L650,260 L710,290 L760,340 L830,380 L880,360 L960,400 L1080,420 L1080,500 L990,520 L960,560 L950,620 L880,570 L840,600 L860,660 L800,720 L790,740 L760,790 L740,840 L690,870 L680,900 L640,880 L615,850 L560,830 L530,910 L490,840 L440,800 L400,830 L350,870 L300,820 L280,770 L250,750 L230,720 L170,740 L150,720 L100,720 L60,740 L35,720Z"/><path d="M0,830 L40,760 L120,740 L230,770 L280,780 L320,860 L370,890 L330,960 L300,1040 L260,1130 L200,1160 L160,1060 L140,960 L60,920 L0,880Z"/><path d="M330,1050 L360,1030 L350,1090 L330,1100Z"/><path d="M870,620 L890,640 L880,700 L820,770 L800,760 L850,700Z"/><path d="M950,540 L990,520 L960,610Z"/><path d="M620,930 L700,1000 L680,1005 L612,945Z"/><path d="M700,920 L760,900 L770,960 L700,970Z"/><path d="M760,990 L900,985 L910,1005 L760,1010Z"/><path d="M750,850 L780,920 L760,930Z"/><path d="M715,1080 L780,1040 L850,1020 L890,1040 L930,1110 L910,1180 L870,1190 L800,1150 L730,1160 L715,1120Z"/><path d="M1060,1170 L1075,1190 L1010,1250 L1000,1240Z"/><path d="M40,590 L70,560 L90,620 L60,640 L45,610Z"/><path d="M145,190 L200,165 L230,200 L175,265Z"/><path d="M375,380 L440,280 L465,285 L400,380Z"/><path d="M600,150 L640,150 L660,230 L620,220Z"/></g><g transform="translate(2630 1110) scale(0.20631)"><path d="M120,1240 L150,1210 L190,1170 L280,1165 L370,1145 L420,1160 L470,1150 L500,1100 L530,1055 L520,1110 L525,1160 L480,1210 L465,1240 L490,1300 L180,1300Z"/><path d="M630,1245 L700,1160 L730,1120 L850,1110 L930,1090 L990,1070 L1040,1100 L1050,1130 L1080,1080 L1180,1075 L1300,1080 L1360,1090 L1440,1130 L1420,1240 L1400,1300 L640,1300Z"/><path d="M560,1290 L585,1230 L600,1290Z"/><path d="M510,1285 L530,1270 L530,1295Z"/></g></g><g fill="#fff" transform="translate(2770 1150) scale(0.08104)"><path d="M510,840 L560,815 L640,830 L650,870 L600,890 L520,880Z"/><path d="M720,820 L760,810 L770,900 L750,940 L730,900Z"/><path d="M575,1030 L600,1030 L690,1215 L665,1225Z"/><path d="M720,1020 L745,1020 L800,1080 L780,1100Z"/><path d="M420,640 L440,530 L480,465 L500,470 L475,560 L520,590 L470,650Z"/><path d="M180,950 L330,890 L380,960 L470,980 L590,990 L580,1010 L430,1015 L330,1000 L190,965Z"/></g></svg>
</div>
<div id="strip"></div>
</body></html>
